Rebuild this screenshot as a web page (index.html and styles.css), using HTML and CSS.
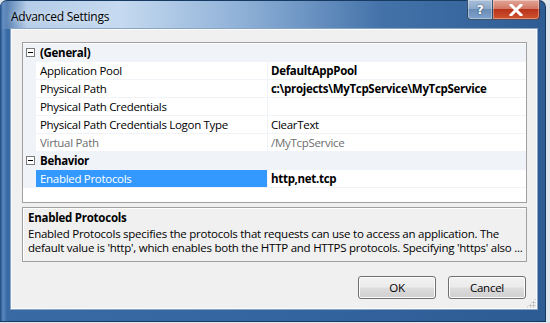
FILE: index.html
```html
<!DOCTYPE html>
<html>
<head>
<meta charset="utf-8">
<link rel="stylesheet" href="styles.css">
</head>
<body>
<div class="window">
  <div class="titlebar">
    <span class="title">Advanced Settings</span>
    <div class="caption">
      <div class="cbtn help">?</div>
      <div class="cbtn close">
        <svg width="14" height="12" viewBox="0 0 14 12"><path d="M2 1 L12 11 M12 1 L2 11" stroke="#fff" stroke-width="3" stroke-linecap="square"/></svg>
      </div>
    </div>
  </div>
  <div class="client">
    <div class="grid">
      <div class="row cat">
        <div class="margin"><span class="box"></span></div>
        <div class="catname">(General)</div>
      </div>
      <div class="row">
        <div class="margin"></div>
        <div class="label">Application Pool</div>
        <div class="value bold">DefaultAppPool</div>
      </div>
      <div class="row">
        <div class="margin"></div>
        <div class="label">Physical Path</div>
        <div class="value bold">c:\projects\MyTcpService\MyTcpService</div>
      </div>
      <div class="row">
        <div class="margin"></div>
        <div class="label">Physical Path Credentials</div>
        <div class="value"></div>
      </div>
      <div class="row">
        <div class="margin"></div>
        <div class="label">Physical Path Credentials Logon Type</div>
        <div class="value">ClearText</div>
      </div>
      <div class="row">
        <div class="margin"></div>
        <div class="label dim">Virtual Path</div>
        <div class="value dim">/MyTcpService</div>
      </div>
      <div class="row cat">
        <div class="margin"><span class="box"></span></div>
        <div class="catname">Behavior</div>
      </div>
      <div class="row">
        <div class="margin"></div>
        <div class="label sel">Enabled Protocols</div>
        <div class="value bold">http,net.tcp</div>
      </div>
    </div>
    <div class="desc">
      <div class="desc-title">Enabled Protocols</div>
      <div class="desc-text">Enabled Protocols specifies the protocols that requests can use to access an application. The<br>default value is 'http', which enables both the HTTP and HTTPS protocols. Specifying 'https' also ...</div>
    </div>
    <div class="buttons">
      <div class="btn">OK</div>
      <div class="btn">Cancel</div>
    </div>
    <div class="grip"></div>
  </div>
</div>
</body>
</html>
```
FILE: styles.css
```css
html, body {
  margin: 0;
  padding: 0;
  background: #dfe6ee;
  width: 550px;
  height: 323px;
  overflow: hidden;
  font-family: "Open Sans", "Noto Sans", sans-serif;
  font-size: 11.5px;
  letter-spacing: -0.25px;
}
.window {
  position: relative;
  width: 546px;
  height: 322px;
  box-sizing: border-box;
  border-radius: 7px 7px 0 0;
  border: 1px solid #173a63;
  border-left: none;
  background:
    linear-gradient(to right, rgba(190,214,240,0) 0%, rgba(195,216,240,0.9) 5%, rgba(205,224,244,0.95) 22%, rgba(170,200,232,0.75) 45%, rgba(100,145,195,0.35) 70%, rgba(40,90,150,0) 100%) top/100% 28px no-repeat,
    linear-gradient(to right, #1d4a80 0px, #5a88bf 3px, #3a6aa3 7px, #3565a0 50%, #2d5b93 100%);
  padding: 0 7px 11px 10px;
  display: flex;
  flex-direction: column;
}
.titlebar {
  height: 27px;
  display: flex;
  justify-content: space-between;
  align-items: flex-start;
}
.title {
  padding-top: 7px;
  padding-left: 1px;
  color: #000;
  font-size: 12px;
  text-shadow: 0 0 6px rgba(255,255,255,0.9);
}
.caption {
  display: flex;
  margin-top: -1px;
  margin-right: -2px;
}
.cbtn {
  height: 20px;
  box-sizing: border-box;
  border: 1px solid rgba(20,40,70,0.7);
  border-top: none;
  display: flex;
  align-items: center;
  justify-content: center;
  color: #fff;
  font-weight: bold;
  font-size: 12px;
  font-family: "DejaVu Sans", sans-serif;
  box-shadow: inset 0 0 0 1px rgba(255,255,255,0.35);
}
.help {
  width: 26px;
  border-radius: 0 0 0 4px;
  background: linear-gradient(to bottom, #a9bfd9 0%, #8ea9c9 45%, #6a8db6 50%, #7ea2cb 100%);
  text-shadow: 0 0 2px #1c3a60;
}
.close {
  width: 47px;
  border-left: none;
  border-radius: 0 0 4px 0;
  background: linear-gradient(to bottom, #e3a598 0%, #d27a66 45%, #b8341c 50%, #d0532f 100%);
}
.client {
  position: relative;
  flex: 1;
  background: #f0f0f0;
  border: 1px solid #8aa4c4;
  box-shadow: inset 0 0 0 1px #fbfcfd;
  padding: 13px 10px 10px 11px;
  display: flex;
  flex-direction: column;
}
.grid {
  height: 161px;
  box-sizing: border-box;
  border: 1px solid #a0a0a0;
  background: #fff;
  padding-top: 1px;
  letter-spacing: -0.3px;
}
.row {
  display: flex;
  height: 18px;
  box-sizing: border-box;
  border-bottom: 1px solid #f0f3f8;
  line-height: 17px;
  color: #000;
}
.margin {
  width: 13px;
  flex: none;
  background: #f0f3f8;
  display: flex;
  align-items: center;
  justify-content: center;
}
.box {
  width: 7px;
  height: 7px;
  border: 1px solid #7a7a7a;
  background: #fff;
  position: relative;
  margin-left: 1px;
}
.box::after {
  content: "";
  position: absolute;
  left: 1px;
  top: 3px;
  width: 5px;
  height: 1px;
  background: #000;
}
.cat {
  background: #f0f3f8;
}
.catname {
  font-weight: bold;
  padding-left: 4px;
}
.label {
  width: 232px;
  flex: none;
  box-sizing: border-box;
  padding-left: 4px;
  border-right: 1px solid #f0f3f8;
  white-space: nowrap;
  overflow: hidden;
}
.label.sel {
  background: #3399ff;
  color: #fff;
}
.value {
  flex: 1;
  padding-left: 3px;
  white-space: nowrap;
}
.bold { font-weight: bold; }
.dim { color: #6d6d6d; }
.desc {
  margin-top: 4px;
  height: 55px;
  box-sizing: border-box;
  border: 1px solid #a0a0a0;
  box-shadow: inset 1px 1px 0 #fff;
  padding: 3px 5px;
  line-height: 14px;
}
.desc-title {
  font-weight: bold;
  margin-bottom: 2px;
}
.desc-text {
  white-space: nowrap;
}
.buttons {
  margin-top: 14px;
  display: flex;
  justify-content: flex-end;
  gap: 12px;
  padding-right: 1px;
}
.btn {
  width: 78px;
  height: 23px;
  box-sizing: border-box;
  border: 1px solid #707070;
  border-radius: 3px;
  background: linear-gradient(to bottom, #f2f2f2 0%, #ebebeb 48%, #dddddd 52%, #cfcfcf 100%);
  box-shadow: inset 0 0 0 1px #fcfcfc;
  display: flex;
  align-items: center;
  justify-content: center;
}
.grip {
  position: absolute;
  right: 1px;
  bottom: 1px;
  width: 10px;
  height: 10px;
  background:
    radial-gradient(circle, #b0b0b0 0.8px, transparent 1.2px) 0 0/3px 3px;
  clip-path: polygon(100% 0, 100% 100%, 0 100%);
}
```
